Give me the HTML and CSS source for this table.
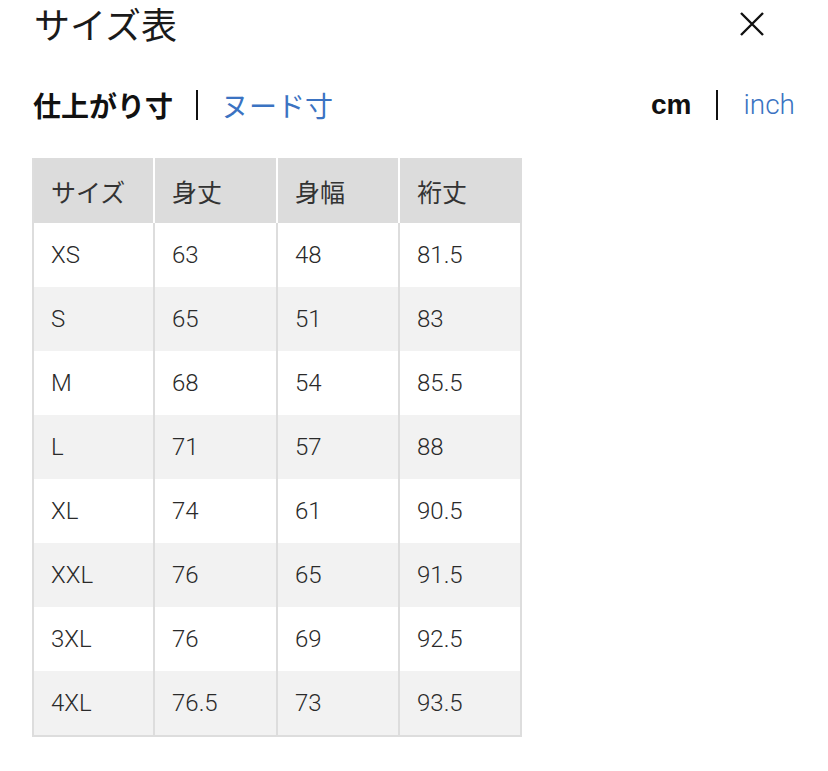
FILE: index.html
```html
<!DOCTYPE html>
<html lang="ja">
<head>
<meta charset="utf-8">
<title>サイズ表</title>
<link rel="stylesheet" href="styles.css">
</head>
<body>
<div class="sheet">
  <header class="top">
    <h1 class="title">サイズ表</h1>
    <button class="close" aria-label="閉じる">
      <svg width="26" height="26" viewBox="0 0 26 26"><path d="M2 2 L24 24 M24 2 L2 24" stroke="#111" stroke-width="2.4" fill="none"/></svg>
    </button>
  </header>
  <div class="tabs">
    <div class="group left">
      <span class="tab active jp">仕上がり寸</span>
      <span class="sep"></span>
      <span class="tab link jp">ヌード寸</span>
    </div>
    <div class="group">
      <span class="tab active">cm</span>
      <span class="sep"></span>
      <span class="tab link">inch</span>
    </div>
  </div>
  <table class="size-table">
    <thead>
      <tr><th class="c1">サイズ</th><th class="c2">身丈</th><th class="c3">身幅</th><th class="c4">裄丈</th></tr>
    </thead>
    <tbody>
      <tr><td>XS</td><td>63</td><td>48</td><td>81.5</td></tr>
      <tr><td>S</td><td>65</td><td>51</td><td>83</td></tr>
      <tr><td>M</td><td>68</td><td>54</td><td>85.5</td></tr>
      <tr><td>L</td><td>71</td><td>57</td><td>88</td></tr>
      <tr><td>XL</td><td>74</td><td>61</td><td>90.5</td></tr>
      <tr><td>XXL</td><td>76</td><td>65</td><td>91.5</td></tr>
      <tr><td>3XL</td><td>76</td><td>69</td><td>92.5</td></tr>
      <tr><td>4XL</td><td>76.5</td><td>73</td><td>93.5</td></tr>
    </tbody>
  </table>
</div>
</body>
</html>
```
FILE: styles.css
```css
html, body {
  margin: 0;
  padding: 0;
  background: #fff;
}
body {
  font-family: "Roboto", "Noto Sans CJK JP", sans-serif;
  color: #222;
}
.sheet {
  width: 828px;
}
.top {
  display: flex;
  justify-content: space-between;
  align-items: center;
  height: 46px;
  padding: 0 63px 0 34px;
}
.title {
  margin: 0;
  font-family: "Noto Sans CJK JP", sans-serif;
  font-weight: 400;
  font-size: 36px;
  line-height: 44px;
  color: #1a1a1a;
}
.close {
  border: 0;
  background: none;
  padding: 0;
  width: 26px;
  height: 26px;
  display: flex;
  margin-top: 2px;
}
.tabs {
  display: flex;
  justify-content: space-between;
  align-items: center;
  height: 40px;
  margin-top: 39px;
  padding: 0 33px 0 33px;
}
.group {
  display: flex;
  align-items: center;
  gap: 25px;
}
.group.left {
  gap: 23px;
}
.tab {
  font-family: "Liberation Sans", sans-serif;
  font-size: 28px;
  line-height: 40px;
}
.tab.jp {
  font-family: "Noto Sans CJK JP", sans-serif;
  font-size: 28px;
}
.tab.active {
  font-weight: 700;
  color: #111;
}
.tab.link {
  font-family: "Roboto", sans-serif;
  color: #3b73c2;
  font-weight: 300;
}
.tab.jp.link {
  font-family: "Noto Sans CJK JP", sans-serif;
  font-weight: 400;
}
.sep {
  width: 2px;
  height: 30px;
  background: #111;
}
.size-table {
  margin: 33px 0 0 32px;
  border-collapse: separate;
  border-spacing: 0;
  border-left: 2px solid #dddddd;
  border-bottom: 2px solid #dddddd;
}
.size-table th,
.size-table td {
  box-sizing: border-box;
  padding: 0 0 0 17px;
  text-align: left;
  vertical-align: middle;
}
.size-table .c1 { width: 121px; }
.size-table .c2 { width: 123px; }
.size-table .c3 { width: 122px; }
.size-table .c4 { width: 122px; }
.size-table th {
  height: 65px;
  background: #dcdcdc;
  font-family: "Noto Sans CJK JP", sans-serif;
  font-weight: 400;
  font-size: 25px;
  color: #333;
  border-right: 2px solid #fff;
}
.size-table th:last-child {
  border-right-color: #dcdcdc;
}
.size-table td {
  height: 64px;
  font-size: 24px;
  font-weight: 300;
  color: #2a2a2a;
  border-right: 2px solid #dddddd;
}
.size-table tbody tr:nth-child(even) td {
  background: #f2f2f2;
}
```
